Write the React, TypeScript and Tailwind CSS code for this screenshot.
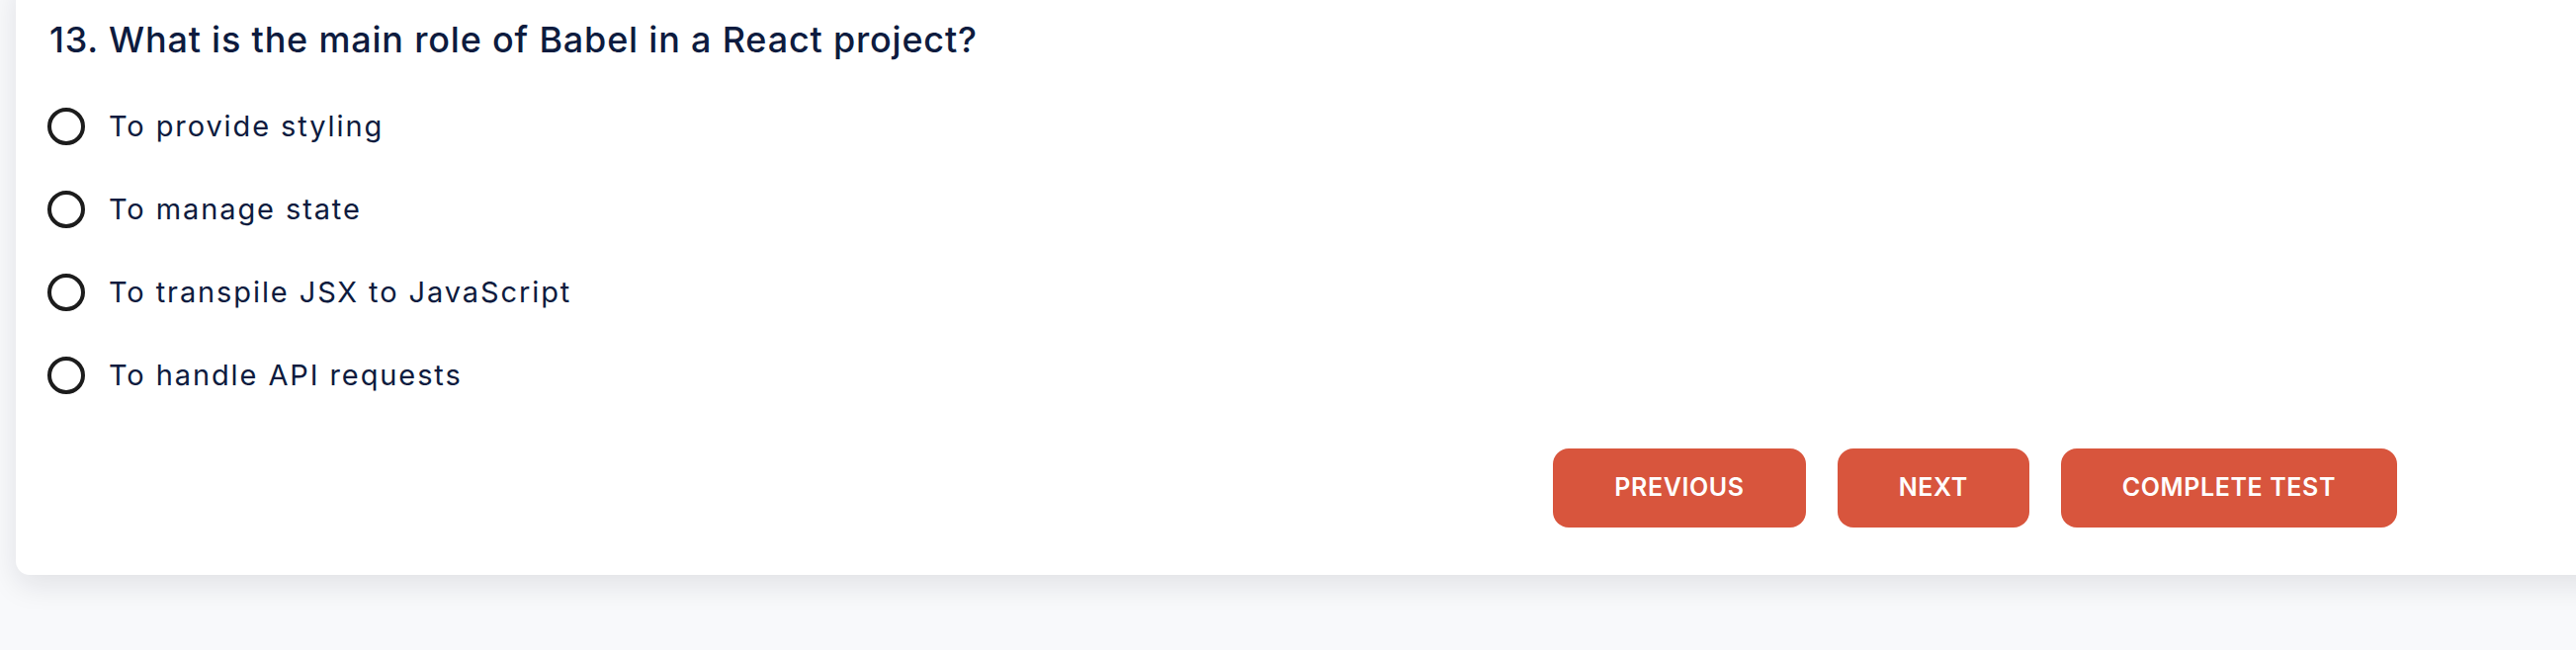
import { useState } from 'react';

const options = ['To provide styling', 'To manage state', 'To transpile JSX to JavaScript', 'To handle API requests'];

export default function App() {
  const [selected, setSelected] = useState<number | null>(null);

  return (
    <div className="min-h-screen overflow-hidden bg-[#f8f9fb] pl-[16px] font-['Inter',sans-serif] text-[#0d1b3e]">
      <section className="-mt-[24px] -mr-[40px] rounded-[14px] bg-white pb-[48px] pl-[32px] pt-[40px] shadow-[0_10px_30px_rgba(15,23,42,0.10)]">
        <h2 className="pl-[2px] text-[36px] font-medium leading-[48px] tracking-[0.8px]">13. What is the main role of Babel in a React project?</h2>

        <div className="mt-[44px] flex flex-col gap-[44px]">
          {options.map((option, index) => (
            <label key={option} className="flex h-[40px] cursor-pointer items-center gap-[24px]" onClick={() => setSelected(index)}>
              <span className="flex h-[38px] w-[38px] items-center justify-center rounded-full border-[4px] border-[#1c1c1c]">
                {selected === index ? <span className="h-[18px] w-[18px] rounded-full bg-[#1c1c1c]" /> : null}
              </span>
              <span className="text-[29px] leading-[40px] tracking-[1.9px]">{option}</span>
            </label>
          ))}
        </div>

        <div className="mt-[54px] flex justify-end gap-[32px] pr-[221px]">
          {['PREVIOUS', 'NEXT', 'COMPLETE TEST'].map((label) => (
            <button key={label} className="h-[80px] rounded-[16px] bg-[#d8553d] px-[62px] text-[25px] font-semibold tracking-[0.6px] text-white">
              {label}
            </button>
          ))}
        </div>
      </section>
    </div>
  );
}
